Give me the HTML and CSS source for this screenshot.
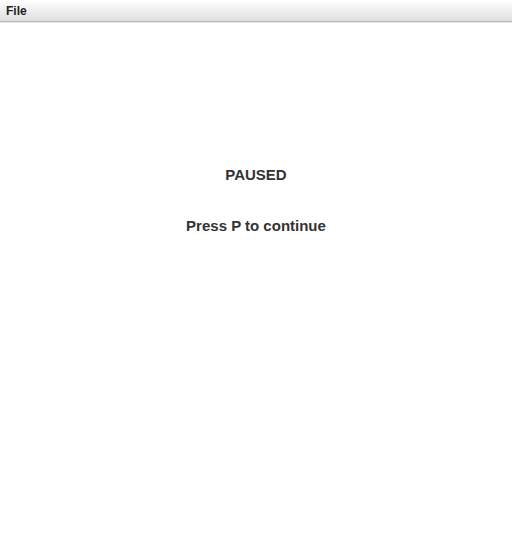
FILE: index.html
```html
<!DOCTYPE html>
<html>
<head>
<meta charset="utf-8">
<link rel="stylesheet" href="styles.css">
</head>
<body>
<div class="menubar"><span class="menu">File</span></div>
<main class="canvas">
  <div class="title">PAUSED</div>
  <div class="hint">Press P to continue</div>
</main>
</body>
</html>
```
FILE: styles.css
```css
html, body {
  margin: 0;
  padding: 0;
  background: #ffffff;
  width: 512px;
  height: 535px;
  overflow: hidden;
}
.menubar {
  height: 21px;
  background: linear-gradient(#ffffff, #dedede);
  border-bottom: 1px solid #b8b8b8;
  box-shadow: 0 1px 0 #e8e8e8;
  display: flex;
  align-items: center;
  padding-left: 6px;
}
.menu {
  font-family: "Liberation Sans", Arial, sans-serif;
  font-weight: bold;
  font-size: 12px;
  color: #222;
}
.canvas {
  display: flex;
  flex-direction: column;
  align-items: center;
  padding-top: 144px;
  font-family: "Liberation Sans", Arial, sans-serif;
  font-weight: bold;
  color: #333;
}
.title {
  font-size: 15px;
  line-height: 17px;
}
.hint {
  font-size: 15px;
  line-height: 17px;
  margin-top: 34px;
}
```
